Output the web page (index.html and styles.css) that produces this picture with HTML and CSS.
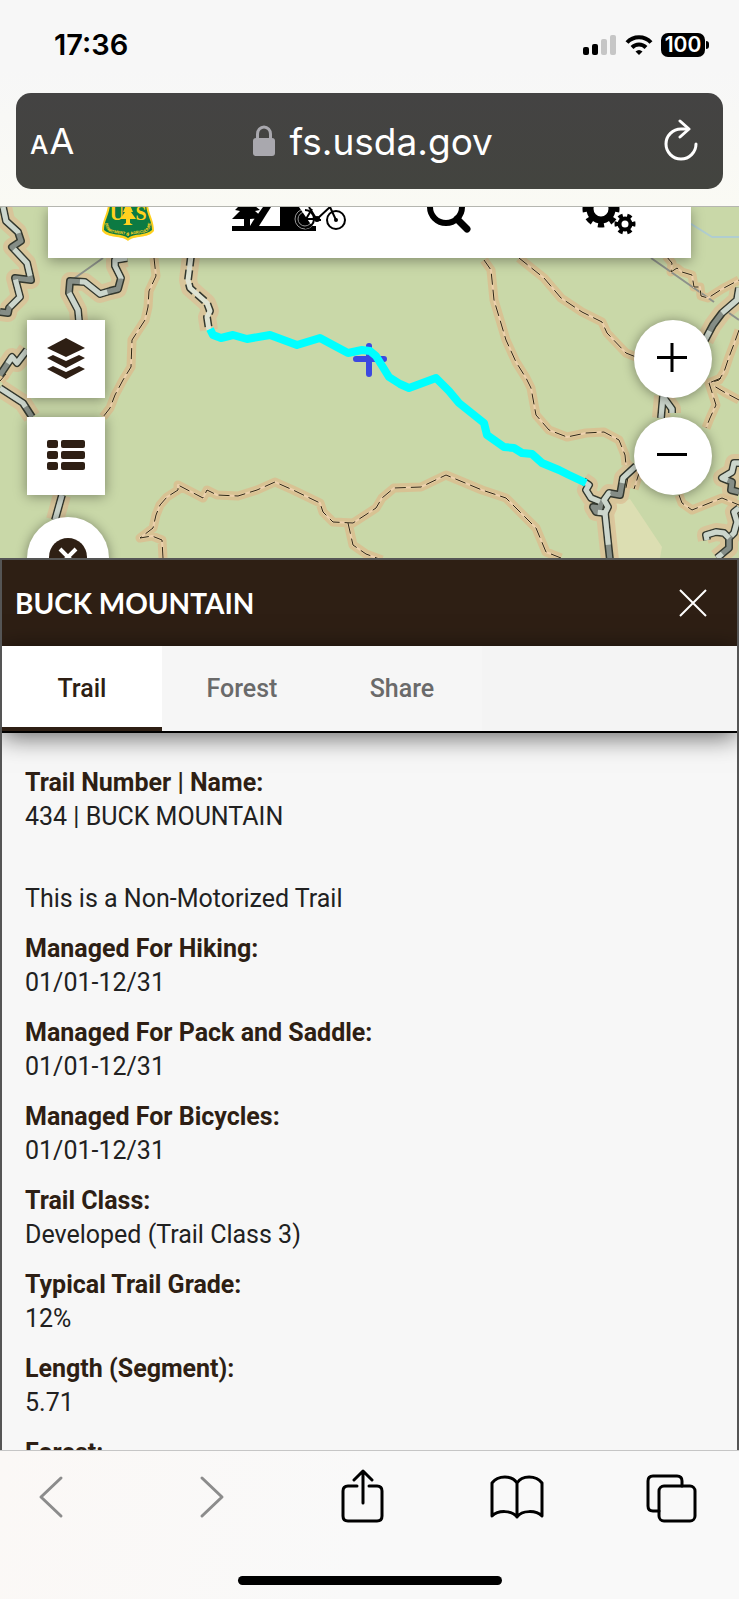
FILE: index.html
```html
<!DOCTYPE html>
<html lang="en">
<head>
  <meta charset="UTF-8">
  <meta name="viewport" content="width=device-width, initial-scale=1">
  <title>BUCK MOUNTAIN</title>
  <link rel="stylesheet" href="styles.css">
</head>
<body>

<header class="browser-top">
  <div class="status">
    <span class="time">17:36</span>
    <div class="status-icons">
      <svg width="34" height="22" viewBox="0 0 34 22" aria-hidden="true">
        <rect x="0" y="13" width="6" height="8" rx="2"/>
        <rect x="9" y="10" width="6" height="11" rx="2"/>
        <rect x="18" y="5" width="6" height="16" rx="2" fill="#c6c6c6"/>
        <rect x="27" y="1" width="6" height="20" rx="2" fill="#c6c6c6"/>
      </svg>
      <svg width="28" height="22" viewBox="0 0 28 22" fill="none" stroke="#000" stroke-width="4" aria-hidden="true">
        <path d="M2 8.500C8.500 1.500 19.500 1.500 26 8.500"/>
        <path d="M7 13.500C11 9.500 17 9.500 21 13.500"/>
        <path d="M10.500 17.500Q14 14.500 17.500 17.500L14 21Z" fill="#000" stroke="none"/>
      </svg>
      <div class="battery">100</div>
    </div>
  </div>
  <div class="address">
    <button class="text-size" aria-label="Page settings"><span class="small-a">A</span><span class="big-a">A</span></button>
    <button class="url">
      <svg width="22" height="32" viewBox="0 0 22 32" aria-hidden="true">
        <path d="M4.500 15V9a6.500 7 0 0 1 13 0v6" fill="none" stroke="#a9a8ae" stroke-width="3"/>
        <rect x="0" y="13" width="22" height="18" rx="3" fill="#a9a8ae"/>
      </svg>
      <span>fs.usda.gov</span>
    </button>
    <button class="reload" aria-label="Reload">
      <svg width="34" height="44" viewBox="0 0 34 44" fill="none" stroke="#fff" stroke-width="3" stroke-linecap="round" stroke-linejoin="round" aria-hidden="true">
        <path d="M32 25A15 15 0 1 1 17 10H24"/>
        <path d="M16 2L25 10L16 18"/>
      </svg>
    </button>
  </div>
</header>

<main class="map">
  <svg class="map-canvas" viewBox="0 207 739 351" preserveAspectRatio="xMidYMin slice" aria-hidden="true">
    <defs>
      <g id="trails">
        <path d="M154 258L156 276L149 291L148 307L145 320L132 340L131 367L123 380L115 395L110 408L103 417"/>
        <path d="M484 260L491 270L494 300L506 340L516 362L526 378L531 388L536 415L549 430L567 437L586 433L604 432L619 440L625 455L626 465"/>
        <path d="M519 258L544 278L561 298L582 312L602 322L607 333L626 353L636 357"/>
        <path d="M666 256L672 263L671 272L677 268L682 272L692 275L694 287L700 287L701 296L708 298L722 289L739 280"/>
        <path d="M739 330L734 344L729 357L724 372L719 380L709 383L716 405L710 418L706 428"/>
        <path d="M739 400L724 392L714 386M721 378L709 383"/>
        <path d="M163 558L162 540L152 536L140 538L153 528L156 515L160 505L167 497L178 490L178 485L203 498L207 490L217 495L238 496L257 490L275 482L293 490L320 503L323 512L333 522L353 523L370 512L376 508L382 498L394 488L421 487L446 475L482 490L506 498L536 528L546 552L561 558"/>
        <path d="M348 523L353 545L366 554L382 560"/>
        <path d="M679 495L682 503L692 510L722 498L739 505"/>
        <path d="M640 470L634 489M628 477L626 488"/>
        <path d="M0 381L6 374"/>
      </g>
      <g id="roads">
        <path d="M3 207L6 221L18 232L21 241L12 247L27 263L31 280L15 278L20 297L9 308L8 313L0 312"/>
        <path d="M127 258L115 260L115 266L121 278L118 289L110 291L100 294L85 282L70 281L69 293L78 310L79 321"/>
        <path d="M27 350L17 363L12 357L0 375"/>
        <path d="M0 388L23 403L32 417"/>
        <path d="M62 495L55 520"/>
        <path d="M739 288L737 300L722 313L713 325L705 340"/>
        <path d="M663 396L661 418M664 398L672 409V413"/>
        <path d="M583 481L589 485L586 490L591 498L601 502L600 508L593 507L596 512L605 513L608 507L604 500L609 493L620 495L623 478L636 466"/>
        <path d="M605 513L608 542L610 560"/>
        <path d="M739 463L734 463L732 472L722 478L732 482L731 490L739 492"/>
        <path d="M739 508L734 512L737 522L734 533L729 538L729 548L717 558M729 538L724 533L716 532L706 535L707 540"/>
      </g>
    </defs>

    <rect x="0" y="207" width="739" height="351" fill="#c9d8a8"/>
    <path d="M612 505L630 499L662 547L660 558H615Z" fill="#dcdeb2"/>
    <path class="stream" d="M688 222L712 237H739"/>

    <use href="#roads" class="halo-wide"/>
    <use href="#trails" class="halo"/>
    <path class="halo-wide" d="M191 256L188 280L190 288L207 303L210 311L207 317L209 330"/>
    <path class="powerline" d="M103 258L72 280M651 258L714 302M729 313L739 320"/>
    <use href="#trails" class="trail-base"/>
    <use href="#trails" class="trail-dash"/>
    <use href="#roads" class="road-edge"/>
    <use href="#roads" class="road-dark"/>
    <use href="#roads" class="road-light"/>

    <path class="gravel-edge" d="M191 256L188 280L190 288L207 303L210 311L207 317L209 330"/>
    <path class="gravel" d="M191 256L188 280L190 288L207 303L210 311L207 317L209 330"/>

    <path class="cross" d="M356 359H384M369 346V374"/>
    <path class="selected" d="M210 329L213 335L221 338L233 335L247 339L270 335L297 345L320 338L333 345L348 353L362 350L370 351L376 356L389 377L400 384L409 388L436 378L449 391L459 403L484 423L487 435L504 447L514 448L522 453L532 454L542 463L559 470L569 475L586 483"/>
  </svg>

  <nav class="map-menu" aria-label="Map menu">
    <button aria-label="Forest Service home">
      <svg width="120" height="51" viewBox="0 0 120 51" aria-hidden="true">
        <defs><path id="shield-arc" d="M37 12C37 22 39 25 46 26Q56 27 60 29Q64 27 74 26C81 25 83 22 83 12"/></defs>
        <path d="M40 -2C39 8 34 13 34 24C40 32 54 28 60 34C66 28 80 32 86 24C86 13 81 8 80 -2Z" fill="#ffd11f"/>
        <path d="M42 -2C41 8 36 14 36 23C42 29 54 26 60 31C66 26 78 29 84 23C84 14 79 8 78 -2Z" fill="#0c7a43"/>
        <text class="shield-letter" x="49" y="13">U</text>
        <text class="shield-letter" x="73" y="13">S</text>
        <path d="M58 -2H62L65 5L63 5L68 12L62 12L62 16L65 18H55L58 16V12L52 12L57 5H55Z" fill="#ffd11f"/>
        <text class="shield-text"><textPath href="#shield-arc" startOffset="50%">DEPARTMENT OF AGRICULTURE</textPath></text>
      </svg>
    </button>
    <button aria-label="Recreation">
      <svg width="120" height="51" viewBox="0 0 120 51" aria-hidden="true">
        <path d="M3 19H15V12H3L11 4L6 3L10 -1H26L31 3L26 4L34 11L21 12V19L24 14L34 0H70L83 19H87V24H3Z"/>
        <path d="M42 0H51V19H30Z" fill="#fff"/>
        <g fill="none" stroke="#fff" stroke-width="1" opacity=".6">
          <circle cx="76" cy="12" r="7"/>
          <circle cx="76" cy="12" r="10"/>
        </g>
        <g fill="none" stroke="#000" stroke-width="2">
          <path d="M76 3A9 9 0 0 1 76 21"/>
          <circle cx="107" cy="13" r="9"/>
          <path d="M77 12H88L101 0L107 13M80 0L88 13L92 13M77 12L83 2"/>
          <circle cx="88" cy="12" r="2" fill="#000"/>
          <circle cx="107" cy="13" r="1"/>
        </g>
      </svg>
    </button>
    <button aria-label="Search">
      <svg width="120" height="51" viewBox="0 0 120 51" fill="none" stroke="#000" aria-hidden="true">
        <circle cx="56" cy="0" r="16" stroke-width="6"/>
        <path d="M67 12L77 22" stroke-width="7" stroke-linecap="round"/>
      </svg>
    </button>
    <button aria-label="Settings">
      <svg width="120" height="51" viewBox="0 0 120 51" fill="none" stroke="#000" aria-hidden="true">
        <circle cx="50" cy="2" r="11" stroke-width="7"/>
        <circle cx="50" cy="2" r="16" stroke-width="5" pathLength="16" stroke-dasharray="1 1" stroke-dashoffset=".5"/>
        <circle cx="74" cy="17" r="5.500" stroke-width="4"/>
        <circle cx="74" cy="17" r="8.500" stroke-width="4" pathLength="12" stroke-dasharray="1 1" stroke-dashoffset=".5"/>
      </svg>
    </button>
  </nav>

  <div class="map-tools">
    <button class="square" aria-label="Layers">
      <svg width="40" height="42" viewBox="0 0 40 42" fill="#2e1f14" aria-hidden="true">
        <path d="M20 0L39 10L20 19L1 10Z"/>
        <path d="M7 17L20 23L33 17L39 20L20 30L1 20Z"/>
        <path d="M7 28L20 34L33 28L39 31L20 41L1 31Z"/>
      </svg>
    </button>
    <button class="square" aria-label="Legend">
      <svg width="40" height="34" viewBox="0 0 40 34" fill="#2e1f14" aria-hidden="true">
        <rect x="1" y="1" width="11" height="8" rx="2"/><rect x="15" y="1" width="24" height="8" rx="2"/>
        <rect x="1" y="12" width="11" height="8" rx="2"/><rect x="15" y="12" width="24" height="8" rx="2"/>
        <rect x="1" y="23" width="11" height="8" rx="2"/><rect x="15" y="23" width="24" height="8" rx="2"/>
      </svg>
    </button>
    <button class="round clear" aria-label="Clear selection">
      <svg width="38" height="40" viewBox="0 0 38 40" aria-hidden="true">
        <circle cx="19" cy="19" r="19" fill="#2e1f14"/>
        <path d="M11 11L27 27M27 11L11 27" stroke="#fff" stroke-width="4"/>
      </svg>
    </button>
  </div>

  <div class="map-zoom">
    <button class="round" aria-label="Zoom in">
      <svg width="32" height="32" viewBox="0 0 32 32" stroke="#000" stroke-width="3" aria-hidden="true"><path d="M0 14.500H30M15 0V29"/></svg>
    </button>
    <button class="round" aria-label="Zoom out">
      <svg width="32" height="32" viewBox="0 0 32 32" stroke="#000" stroke-width="3" aria-hidden="true"><path d="M0 14.500H30"/></svg>
    </button>
  </div>
</main>

<section class="panel">
  <div class="panel-head">
    <h1>BUCK MOUNTAIN</h1>
    <button class="close" aria-label="Close">
      <svg width="28" height="28" viewBox="0 0 28 28" stroke="#fff" stroke-width="2" aria-hidden="true"><path d="M1 1L27 27M27 1L1 27"/></svg>
    </button>
  </div>
  <div class="tabs" role="tablist">
    <button class="tab active" role="tab" aria-selected="true">Trail</button>
    <button class="tab" role="tab" aria-selected="false">Forest</button>
    <button class="tab" role="tab" aria-selected="false">Share</button>
  </div>
  <div class="details">
    <p class="first"><b>Trail Number | Name:</b><br>434 | BUCK MOUNTAIN</p>
    <p>This is a Non-Motorized Trail</p>
    <p><b>Managed For Hiking:</b><br>01/01-12/31</p>
    <p><b>Managed For Pack and Saddle:</b><br>01/01-12/31</p>
    <p><b>Managed For Bicycles:</b><br>01/01-12/31</p>
    <p><b>Trail Class:</b><br>Developed (Trail Class 3)</p>
    <p><b>Typical Trail Grade:</b><br>12%</p>
    <p><b>Length (Segment):</b><br>5.71</p>
    <p><b>Forest:</b></p>
  </div>
</section>

<footer class="browser-bottom">
  <nav class="actions" aria-label="Browser">
    <button aria-label="Back">
      <svg class="muted" width="56" height="56" viewBox="0 0 56 56"><path d="M39 9L19 28L39 47"/></svg>
    </button>
    <button aria-label="Forward">
      <svg class="muted" width="56" height="56" viewBox="0 0 56 56"><path d="M24 9L44 28L24 47"/></svg>
    </button>
    <button aria-label="Share">
      <svg width="56" height="56" viewBox="0 0 56 56"><path d="M24 17H15Q10 17 10 22V47Q10 52 15 52H44Q49 52 49 47V22Q49 17 44 17H36M30 34V2M21 11L30 2L39 11"/></svg>
    </button>
    <button aria-label="Bookmarks">
      <svg width="56" height="56" viewBox="0 0 56 56"><path d="M28 14C23 6 9 6 3 14V47C9 41 23 41 28 48C33 41 47 41 53 47V14C47 6 33 6 28 14V48"/></svg>
    </button>
    <button aria-label="Tabs">
      <svg width="56" height="56" viewBox="0 0 56 56"><path d="M15 42H9Q4 42 4 37V12Q4 7 9 7H33Q38 7 38 12V17"/><rect x="15" y="17" width="36" height="35" rx="5"/></svg>
    </button>
  </nav>
  <div class="home-bar"></div>
</footer>

</body>
</html>
```
FILE: styles.css
```css
* {
  box-sizing: border-box;
}

body {
  margin: 0;
  height: 100vh;
  display: flex;
  flex-direction: column;
  overflow: hidden;
  background: #f7f7f7;
  color: #212121;
  font-family: Roboto, Arial, sans-serif;
  font-size: 25px;
}

button {
  padding: 0;
  border: none;
  background: none;
  color: inherit;
  font: inherit;
  cursor: pointer;
}

svg {
  display: block;
}

/* browser bar */
.browser-top {
  flex: none;
  padding: 0 16px 17px;
  border-bottom: 1px solid #b5b6b0;
  background: linear-gradient(#f7f7f7 70px, #fafaf4);
  font-family: Inter, "Liberation Sans", sans-serif;
}

.status {
  display: flex;
  justify-content: space-between;
  align-items: center;
  height: 93px;
  padding: 0 14px 4px 38px;
}

.time {
  color: #000;
  font-size: 29px;
  font-weight: 600;
}

.status-icons {
  display: flex;
  align-items: center;
  gap: 8px;
}

.battery {
  position: relative;
  width: 44px;
  margin-right: 4px;
  border-radius: 7px;
  background: #000;
  color: #fff;
  font-size: 21px;
  font-weight: 600;
  line-height: 24px;
  text-align: center;
}

.battery::after {
  content: "";
  position: absolute;
  left: 45px;
  top: 8px;
  width: 3px;
  height: 8px;
  border-radius: 0 4px 4px 0;
  background: #000;
}

.address {
  display: flex;
  justify-content: space-between;
  align-items: center;
  height: 96px;
  padding: 0 25px 0 14px;
  border-radius: 15px;
  background: linear-gradient(#444343, #43443f);
  color: #fff;
}

.text-size {
  display: flex;
  align-items: baseline;
  gap: 1px;
}

.small-a {
  font-size: 26px;
  font-weight: 500;
}

.big-a {
  font-size: 36px;
}

.url {
  display: flex;
  align-items: center;
  gap: 14px;
  margin-left: 8px;
  font-size: 37px;
}

/* map */
.map {
  flex: none;
  position: relative;
  height: 351px;
  overflow: hidden;
  background: #c9d8a8;
}

.map-canvas {
  width: 100%;
  height: 100%;
}

.map-canvas path,
.map-canvas use {
  stroke-linejoin: round;
}

.map-canvas use,
.halo-wide,
.stream,
.powerline,
.gravel,
.gravel-edge,
.cross,
.selected {
  fill: none;
}

.halo {
  stroke: #dcbd8f;
  stroke-width: 9;
  opacity: .8;
}

.halo-wide {
  stroke: #dcc197;
  stroke-width: 18;
  opacity: .8;
}

.stream {
  stroke: #b0cdd0;
  stroke-width: 2;
}

.powerline {
  stroke: #8d918a;
  stroke-width: 2;
}

.trail-base {
  stroke: #ecd0ac;
  stroke-width: 2;
}

.trail-dash {
  stroke: #2a2612;
  stroke-width: 1;
  stroke-dasharray: 11 5;
}

.road-edge {
  stroke: #33382e;
  stroke-width: 8;
}

.road-dark {
  stroke: #858d86;
  stroke-width: 5;
}

.road-light {
  stroke: #ccd6cc;
  stroke-width: 5;
  stroke-dasharray: 32 22;
}

.gravel-edge {
  stroke: #33382e;
  stroke-width: 8;
  stroke-dasharray: 10 4;
}

.gravel {
  stroke: #dfe3d3;
  stroke-width: 5;
}

.cross {
  stroke: #3c48e0;
  stroke-width: 6;
  stroke-linecap: round;
}

.selected {
  stroke: #00ffff;
  stroke-width: 8;
}

.map-menu {
  position: absolute;
  top: 0;
  left: 48px;
  right: 48px;
  display: grid;
  grid-template-columns: repeat(4, 1fr);
  justify-items: center;
  background: #fff;
  box-shadow: 0 3px 12px rgba(0, 0, 0, .35);
}

.shield-letter {
  fill: #ffd11f;
  font-family: "Liberation Serif", serif;
  font-size: 20px;
  font-weight: bold;
  text-anchor: middle;
}

.shield-text {
  fill: #ffd11f;
  font-size: 4px;
  font-weight: bold;
  text-anchor: middle;
}

.map-tools,
.map-zoom {
  position: absolute;
  top: 113px;
  display: flex;
  flex-direction: column;
  gap: 19px;
}

.map-tools {
  left: 27px;
}

.map-zoom {
  right: 27px;
}

.square,
.round {
  display: flex;
  align-items: center;
  justify-content: center;
  width: 78px;
  height: 78px;
  background: #fff;
  box-shadow: 0 1px 12px rgba(0, 0, 0, .4);
}

.round {
  border-radius: 50%;
}

.clear {
  width: 82px;
  height: 82px;
  margin-top: 3px;
}

/* trail panel */
.panel {
  flex: 1;
  display: flex;
  flex-direction: column;
  min-height: 0;
  overflow: hidden;
  position: relative;
  border: 2px solid #555;
  border-bottom: none;
}

.panel-head {
  flex: none;
  display: flex;
  justify-content: space-between;
  align-items: center;
  height: 86px;
  padding: 0 30px 0 13px;
  background: #2e1f14;
  color: #fff;
}

h1 {
  margin: 0;
  font-family: Lato, "Open Sans", sans-serif;
  font-size: 28px;
  font-weight: 700;
}

.tabs {
  flex: none;
  display: flex;
  height: 87px;
  border-bottom: 2px solid #000;
  background: #f4f4f4;
  box-shadow: 0 4px 24px rgba(0, 0, 0, .6);
}

.tab {
  width: 160px;
  background: #f6f6f6;
  color: #6a6a6a;
  font-weight: 500;
}

.active {
  padding-top: 4px;
  border-bottom: 4px solid #2e1f14;
  background: #fff;
  color: #2e1f14;
}

.details {
  padding: 33px 23px 0;
  line-height: 34px;
}

.details p {
  margin: 0 0 16px;
}

.details .first {
  margin-bottom: 48px;
}

.details b {
  color: #2e1f14;
}

/* browser toolbar */
.browser-bottom {
  flex: none;
  display: flex;
  flex-direction: column;
  align-items: center;
  justify-content: space-between;
  height: 149px;
  padding: 18px 39px 14px 22px;
  border-top: 1px solid #c6c6c6;
  background: linear-gradient(100deg, #fbf8f6, #f9f9f9 50%);
}

.actions {
  display: flex;
  justify-content: space-between;
  width: 100%;
}

.actions svg {
  fill: none;
  stroke: #000;
  stroke-width: 3;
  stroke-linecap: round;
  stroke-linejoin: round;
}

.actions .muted {
  stroke: #8c8c8c;
}

.home-bar {
  width: 264px;
  height: 9px;
  margin-left: 17px;
  border-radius: 5px;
  background: #000;
}
```
